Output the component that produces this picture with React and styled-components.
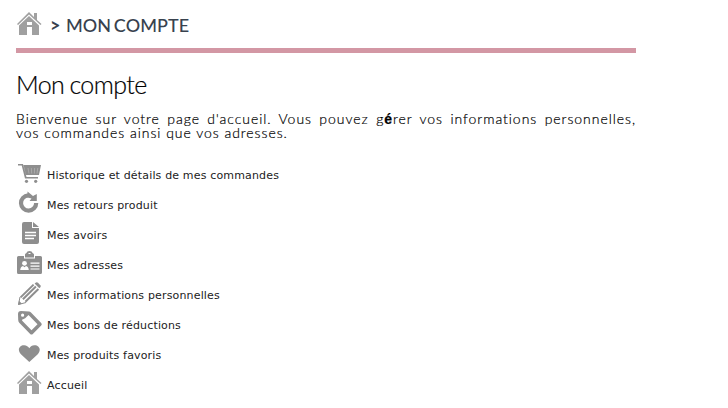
import React from "react";
import styled, { createGlobalStyle } from "styled-components";

const GlobalStyle = createGlobalStyle`
  * { box-sizing: border-box; }
  body { margin: 0; background: #fff; }
`;

const Page = styled.main`
  width: 636px;
  min-height: 408px;
  padding: 11px 0 0 16px;
  font-family: Lato, sans-serif;
  color: #000;
`;

const Breadcrumb = styled.nav`
  display: flex;
  height: 42px;
  padding-left: 1px;
  border-bottom: 5px solid #d397a4;
  color: #38424e;
  font-size: 18px;
  line-height: 29px;
  white-space: nowrap;
`;

const Separator = styled.span`
  margin-left: 7px;
  width: 16px;
  font-weight: 700;
`;

const Current = styled.span`
  letter-spacing: 0.07px;
  word-spacing: -2px;
  font-weight: 500;
`;

const Title = styled.h1`
  margin: 16px 0 0;
  font-size: 25px;
  line-height: 30px;
  font-weight: 300;
  letter-spacing: -0.6px;
  word-spacing: -1px;
  -webkit-text-stroke: 0.2px #000;
`;

const Intro = styled.p`
  margin: 13px 0 0;
  font-size: 14px;
  line-height: 14px;
  font-weight: 300;
  letter-spacing: 0.96px;
  text-align: justify;
  -webkit-text-stroke: 0.2px #000;
`;

const Accent = styled.b`
  font-family: "Liberation Sans", sans-serif;
  font-weight: 700;
`;

const Links = styled.ul`
  margin: 20px 0 0;
  padding: 0;
  list-style: none;
`;

const Row = styled.li`
  display: flex;
  height: 30px;
  padding-left: 1px;
`;

const RowLink = styled.a`
  margin-left: 4px;
  padding-top: 1px;
  color: #222;
  font: 11px/30px "DejaVu Sans", Verdana, sans-serif;
  letter-spacing: 0.16px;
  white-space: nowrap;
`;

const Glyph = styled.svg`
  flex: none;
  display: block;
  width: 26px;
  height: 26px;
  fill: ${(p) => p.$tone || "#8e8e8e"};
`;

const House = () => (
  <Glyph viewBox="0 0 26 26" $tone="#a0a0a0">
    <path d="M12 1 L17 6 V2 H20 V9 L24.5 13 L23.5 14 L12 3.4 L1 14 L0 13Z" />
    <path d="M12 5 L22 14.5 V24 H15 V16 H10 V24 H2 V14.5Z M10 11 V14 H15 V11Z" fillRule="evenodd" />
  </Glyph>
);

const Cart = () => (
  <Glyph viewBox="0 0 26 26">
    <path d="M1 4 H6 L9.5 17 H21 V18.5 H8 L4.7 5.5 H1Z M6.5 5 H24 L22 15 H9Z" />
    <path d="M11 8 L12 13.5 M14.3 8 L14.7 13.5 M17.6 8 L17.4 13.5 M20.8 8 L20 13.5" stroke="#b5b5b5" strokeWidth="0.7" />
    <circle cx="9.5" cy="21.3" r="1.6" />
    <circle cx="18.7" cy="21.3" r="1.6" />
  </Glyph>
);

const Return = () => (
  <Glyph viewBox="0 0 26 26">
    <path d="M19.2 13 A7.6 7.6 0 1 1 11.2 5.4" fill="none" stroke="#8e8e8e" strokeWidth="4.2" />
    <path d="M10.5 1.5 L16 6 L19.8 4 V11 H12.5 L14.5 8.5 L10.5 7.5Z" />
  </Glyph>
);

const Sheet = () => (
  <Glyph viewBox="0 0 26 26">
    <path d="M7 2 H15 V8 H22 V22 Q22 24 20 24 H7 Q5 24 5 22 V4 Q5 2 7 2Z M16 2 L22 7 H16Z" />
    <path d="M8 12.5 H19 M8 15.5 H19 M8 18.5 H17" stroke="#fff" strokeWidth="1.3" />
  </Glyph>
);

const Badge = () => (
  <Glyph viewBox="0 0 26 26">
    <path fillRule="evenodd" d="M1.5 6 H7 V8.5 H18 V6 H23.5 Q25 6 25 7.5 V22.5 Q25 24 23.5 24 H1.5 Q0 24 0 22.5 V7.5 Q0 6 1.5 6Z M8 7.5 V4.5 Q8 3.5 9.2 3.3 Q10 1 12.5 1 Q15 1 15.8 3.3 Q17 3.5 17 4.5 V7.5Z M11.5 4 H13.5 V2.9 H11.5Z" />
    <g fill="#fff">
      <circle cx="7.5" cy="13.3" r="2.4" />
      <path d="M3.2 20 Q3.5 16.5 6 16 L7.5 17.3 L9 16 Q11.5 16.5 11.8 20Z M13.5 12.5 H22.5 V13.8 H13.5Z M13.5 15.5 H22.5 V16.8 H13.5Z M13.5 18.4 H22.5 V19.6 H13.5Z" />
    </g>
  </Glyph>
);

const Pencil = () => (
  <Glyph viewBox="0 0 26 26">
    <path d="M3.6 17.4 L16.6 4.6 M5.9 19.3 L18.9 6.5 M8.4 21.8 L21.4 9" stroke="#8e8e8e" strokeWidth="2" />
    <path d="M17.6 3.6 L19 2.5 Q20 1.8 21 2.8 L23.3 5.2 Q24.2 6.2 23.4 7.2 L22.3 8.2Z" />
    <path d="M3 17 L1.5 24.5 L9 22.5" fill="none" stroke="#8e8e8e" strokeWidth="1" />
    <path d="M1 25 L2 20.8 L5 23.8Z" />
  </Glyph>
);

const Tag = () => (
  <Glyph viewBox="0 0 26 26">
    <path fillRule="evenodd" d="M1 4 Q1 1 4 1 L12 1.4 Q13 1.5 14 2.5 L24.2 13 Q25.4 14.3 24.2 15.5 L15.8 24 Q14.5 25.2 13.2 24 L2.5 13 Q1.3 12 1.2 10Z M11.5 5 L8.2 8.2 L5 9.8 L5.2 10.8 L14.5 20.3 L20.5 14.2Z M5.6 3.6 A1.6 1.6 0 1 0 5.6 6.8 A1.6 1.6 0 1 0 5.6 3.6Z" />
  </Glyph>
);

const Heart = () => (
  <Glyph viewBox="0 0 26 26">
    <path d="M12.3 22 L4.2 14.5 C-.8 9.2 3.3 4.8 7.2 5.2 C9.5 5.4 11.2 6.5 12.3 8.2 C13.5 6.3 15.2 5.4 17.2 5.2 C21.5 4.8 25.3 9.3 20.5 14.5Z" />
  </Glyph>
);

const items = [
  { icon: Cart, label: "Historique et détails de mes commandes" },
  { icon: Return, label: "Mes retours produit" },
  { icon: Sheet, label: "Mes avoirs" },
  { icon: Badge, label: "Mes adresses" },
  { icon: Pencil, label: "Mes informations personnelles" },
  { icon: Tag, label: "Mes bons de réductions" },
  { icon: Heart, label: "Mes produits favoris" },
  { icon: House, label: "Accueil" },
];

export default function App() {
  return (
    <Page>
      <GlobalStyle />
      <Breadcrumb>
        <House />
        <Separator>&gt;</Separator>
        <Current>MON COMPTE</Current>
      </Breadcrumb>
      <Title>Mon compte</Title>
      <Intro>
        Bienvenue sur votre page d'accueil. Vous pouvez g<Accent>é</Accent>rer vos
        informations personnelles, vos commandes ainsi que vos adresses.
      </Intro>
      <Links>
        {items.map(({ icon: Icon, label }) => (
          <Row key={label}>
            <Icon />
            <RowLink>{label}</RowLink>
          </Row>
        ))}
      </Links>
    </Page>
  );
}
